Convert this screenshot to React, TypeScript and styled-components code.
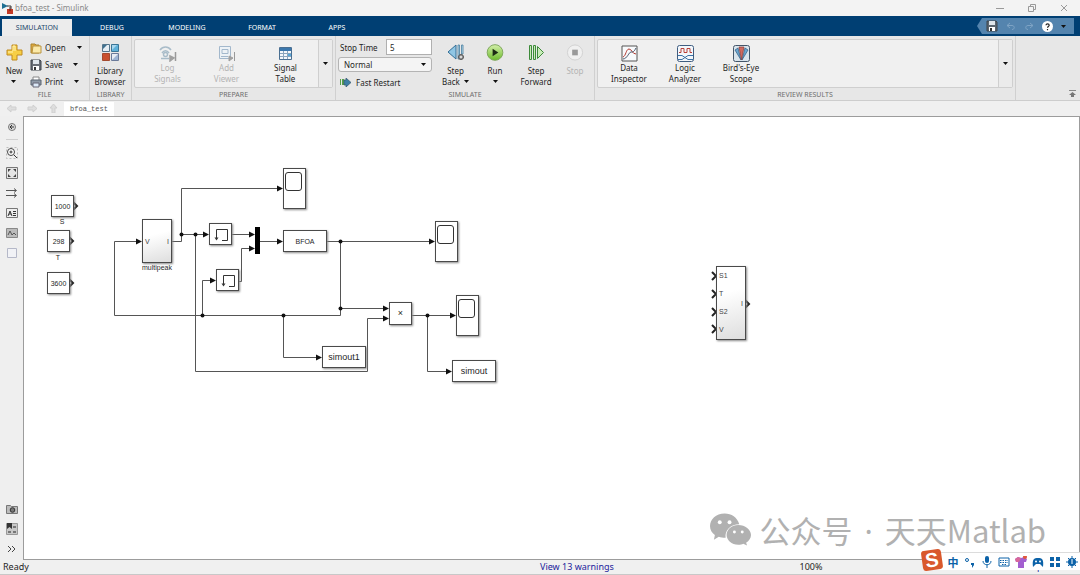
import React from "react";
import styled, { createGlobalStyle, css } from "styled-components";

const Global = createGlobalStyle`
  * { box-sizing: border-box; }
  body { margin: 0; background: #f0f0f0; }
  body, button, input, select {
    font-family: "Noto Sans", "Open Sans", "Noto Sans CJK SC", sans-serif;
    font-size: 8px;
    line-height: 11px;
    color: #1f1f1f;
  }
  button { border: 0; padding: 0; margin: 0; background: none; }
  svg { display: block; flex: none; }
`;

const Window = styled.div`
  display: flex;
  flex-direction: column;
  min-height: 100vh;
  position: relative;
`;

/* ---------- title bar ---------- */

const TitleBar = styled.header`
  display: flex;
  align-items: center;
  height: 16px;
  padding: 0 12px 0 2px;
  background: #f3f3f3;
  color: #8a8a8a;
`;

const WindowTitle = styled.h1`
  flex: 1;
  margin: 0 0 0 2px;
  font-size: 8px;
  line-height: 16px;
  font-weight: 400;
`;

const WindowButtons = styled.div`
  display: flex;
  gap: 24px;
`;

/* ---------- tab strip ---------- */

const TabStrip = styled.nav`
  display: flex;
  align-items: flex-end;
  gap: 5px;
  height: 20px;
  padding: 0 6px 0 2px;
  background: #003f73;
`;

const Tab = styled.button<{ $active?: boolean }>`
  width: 70px;
  height: 17px;
  font-size: 7px;
  color: #fff;
  ${(p) => p.$active && css`
    background: #ececec;
    color: #24476b;
  `}
`;

const QuickAccess = styled.div`
  display: flex;
  align-items: center;
  gap: 8px;
  height: 16px;
  margin: 0 0 2px auto;
  padding: 0 8px 0 9px;
  background: #5484ae;
  clip-path: polygon(5px 0, 100% 0, 100% 100%, 5px 100%, 0 50%);
`;

/* ---------- ribbon ---------- */

const Ribbon = styled.div`
  display: flex;
  height: 65px;
  background: #e7e7e7;
  border-bottom: 1px solid #cdcdcd;
`;

const Group = styled.section<{ $width?: number }>`
  display: flex;
  flex-direction: column;
  flex: ${(p) => (p.$width ? `0 0 ${p.$width}px` : "1 1 0")};
  border-right: 1px solid #d0d0d0;
`;

const GroupBody = styled.div`
  display: flex;
  height: 54px;
  padding: 3px 2px 0;
`;

const GroupLabel = styled.h2`
  margin: 0;
  font-size: 7px;
  line-height: 10px;
  font-weight: 400;
  text-align: center;
  color: #6e6e6e;
`;

const BigButton = styled.button<{ $width: number; $tight?: boolean }>`
  display: flex;
  flex-direction: column;
  align-items: center;
  width: ${(p) => p.$width}px;
  padding-top: 5px;
  gap: ${(p) => (p.$tight ? 0 : 4)}px;
  color: #1f1f1f;
  &:disabled { color: #b4b4b4; }
`;

const CaptionLine = styled.span`
  display: flex;
  align-items: center;
  justify-content: center;
  gap: 4px;
  height: 11px;
`;

const Caption = styled.span`
  display: flex;
  flex-direction: column;
`;

const FileRows = styled.div`
  display: flex;
  flex-direction: column;
  margin-left: 4px;
`;

const FileRow = styled.button`
  display: flex;
  align-items: center;
  gap: 3px;
  height: 17px;
`;

const RowCaret = styled.span`
  margin-left: 8px;
`;

const Gallery = styled.div`
  display: flex;
  flex: 1;
  height: 49px;
  padding-left: 3px;
  border: 1px solid #cfcfcf;
  border-radius: 2px;
  background: #f0f0f0;
`;

const GalleryMore = styled.button`
  display: flex;
  align-items: center;
  justify-content: center;
  width: 14px;
  margin-left: auto;
  border-left: 1px solid #cfcfcf;
  background: #ebebeb;
`;

const SimFields = styled.div`
  display: flex;
  flex-direction: column;
  gap: 2px;
  width: 94px;
`;

const FieldLine = styled.label`
  display: flex;
  align-items: center;
  justify-content: space-between;
  padding-left: 2px;
`;

const TimeInput = styled.input`
  width: 46px;
  height: 16px;
  padding: 0 3px;
  border: 1px solid #b0b0b0;
  background: #fff;
`;

const SelectWrap = styled.div`
  display: grid;
  align-items: center;
  > * { grid-area: 1 / 1; }
  > svg { justify-self: end; margin-right: 6px; pointer-events: none; }
`;

const ModeSelect = styled.select`
  appearance: none;
  height: 15px;
  padding: 0 5px;
  border: 1px solid #b4b4b4;
  border-radius: 3px;
  background: #f4f4f4;
`;

const FastRestart = styled.button`
  display: flex;
  align-items: center;
  gap: 4px;
  height: 16px;
  padding-left: 2px;
`;

const RibbonTail = styled.div`
  display: flex;
  align-items: flex-end;
  justify-content: flex-end;
  flex: 0 0 64px;
  padding: 0 4px 2px 0;
`;

/* ---------- path bar ---------- */

const PathBar = styled.div`
  display: flex;
  align-items: center;
  height: 15px;
  padding-left: 6px;
  gap: 10px;
  background: #f0f0f0;
`;

const PathTab = styled.button`
  align-self: flex-end;
  width: 50px;
  height: 14px;
  margin-left: -5px;
  background: #fff;
  font-family: "Liberation Mono", monospace;
  font-size: 7px;
  color: #555;
`;

/* ---------- workspace ---------- */

const Workspace = styled.main`
  display: flex;
  flex: 1;
`;

const SideBar = styled.aside`
  display: flex;
  flex-direction: column;
  align-items: center;
  gap: 8px;
  width: 23px;
  padding: 5px 0;
  background: #efefef;
`;

const ToolButton = styled.button`
  display: flex;
  align-items: center;
  justify-content: center;
  width: 12px;
  height: 12px;
`;

const SideRule = styled.hr`
  width: 12px;
  height: 1px;
  margin: -2px 0 -1px;
  border: 0;
  background: #cfcfcf;
`;

const SideSpacer = styled.div`
  flex: 1;
`;

const Canvas = styled.div`
  position: relative;
  flex: 1;
  min-height: 444px;
  overflow: hidden;
  background: #fff;
  border: 1px solid #9c9c9c;
`;

const Wires = styled.svg`
  position: absolute;
  left: 0;
  top: 0;
`;

type Box = { $x: number; $y: number; $w: number; $h: number };

const Block = styled.div<Box & { $shaded?: boolean; $size?: number }>`
  position: absolute;
  left: ${(p) => p.$x}px;
  top: ${(p) => p.$y}px;
  width: ${(p) => p.$w}px;
  height: ${(p) => p.$h}px;
  display: flex;
  align-items: center;
  justify-content: center;
  border: 1px solid #4a4a4a;
  background: ${(p) => (p.$shaded ? "linear-gradient(165deg, #fff 35%, #dedede)" : "#fff")};
  box-shadow: 1px 1px 2px #8a8a8a;
  font-family: "Liberation Sans", Arial, sans-serif;
  font-size: ${(p) => p.$size ?? 7}px;
`;

const BlockName = styled.div<{ $x: number; $y: number }>`
  position: absolute;
  left: ${(p) => p.$x}px;
  top: ${(p) => p.$y}px;
  width: 40px;
  text-align: center;
  font-family: "Liberation Sans", Arial, sans-serif;
  font-size: 7px;
  line-height: 8px;
`;

const PortRow = styled.div`
  display: flex;
  align-items: center;
  justify-content: space-between;
  width: 100%;
  padding: 0 2px;
  color: #444;
`;

const PortColumn = styled.div`
  display: flex;
  flex-direction: column;
  line-height: 18px;
`;

const ScopeBody = styled(Block)`
  align-items: flex-start;
  padding: 3px 2px 0 0;
`;

const ScopeScreen = styled.div`
  width: 17px;
  height: 19px;
  border: 1px solid #333;
  border-radius: 3px;
`;

const Watermark = styled.div`
  position: absolute;
  right: 33px;
  bottom: 7px;
  display: flex;
  align-items: center;
  gap: 9px;
  color: #b1b1b1;
  font-family: "Noto Sans CJK SC", sans-serif;
  font-size: 31px;
  font-weight: 400;
  line-height: 44px;
  white-space: pre;
`;

const MiddleDot = styled.span`
  margin: 0 5px;
  font-family: "Noto Sans", sans-serif;
  line-height: 1;
`;

/* ---------- status bar ---------- */

const StatusBar = styled.footer`
  display: grid;
  grid-template-columns: 2fr 1fr 1fr;
  align-items: center;
  height: 15px;
  padding: 0 3px;
  border-bottom: 1px solid #c8c8c8;
  background: #f0f0f0;
  font-size: 9px;
  line-height: 14px;
`;

const StatusLink = styled.a`
  color: #1d1d9c;
  text-decoration: none;
`;

const StatusRight = styled.div`
  display: flex;
  justify-content: space-between;
  margin-left: -9px;
`;

/* ---------- input method bar ---------- */

const ImeBar = styled.div`
  position: absolute;
  right: 0;
  bottom: 5px;
  display: flex;
  align-items: center;
  gap: 5px;
  height: 18px;
  padding: 0 2px 0 0;
  background: #fff;
  border-top: 1px solid #dcdcdc;
`;

const ImeLogo = styled.div`
  display: flex;
  align-items: center;
  justify-content: center;
  width: 20px;
  height: 20px;
  margin: -3px 0 0 -1px;
  border-radius: 3px;
  background: #d9582c;
  color: #fff;
  font: 700 20px/20px "Liberation Sans", sans-serif;
  transform: rotate(-8deg);
`;

const ImeButton = styled.button`
  display: flex;
  align-items: center;
  justify-content: center;
  width: 12px;
  height: 14px;
  font: 700 11px/14px "Noto Sans CJK SC", sans-serif;
  color: #0c62a8;
`;

/* ---------- drawings ---------- */

const Caret = ({ color = "#111" }: { color?: string }) => (
  <svg width="5" height="3" viewBox="0 0 5 3"><path d="M0 0h5L2.5 3z" fill={color} /></svg>
);

const AppIcon = () => (
  <svg width="11" height="12" viewBox="0 0 11 12">
    <path d="M0 1l6 3-6 3z" fill="#1f6f92" />
    <path d="M5 4h4v3" stroke="#333" fill="none" />
    <path d="M5 7h6v5H5z" fill="#c23a26" />
    <path d="M8 5v4" stroke="#5a2018" />
  </svg>
);

const PlusIcon = () => (
  <svg width="17" height="17" viewBox="0 0 17 17">
    <path d="M6 1h5v5h5v5h-5v5H6v-5H1V6h5z" fill="#f7cf45" stroke="#c08a1e" strokeLinejoin="round" />
    <path d="M7 7V2h2v5M2 8h5" stroke="#fff3b8" fill="none" />
  </svg>
);

const FolderIcon = () => (
  <svg width="12" height="12" viewBox="0 0 12 12">
    <path d="M1 2h4l1 1h3v8H1z" fill="#e2a93a" stroke="#a8832f" />
    <path d="M3 4h8v7H2z" fill="#fbe9a8" stroke="#b99443" />
  </svg>
);

const FloppyIcon = ({ light }: { light?: boolean }) => (
  <svg width="12" height="12" viewBox="0 0 12 12">
    <path d="M1 1h9l1 1v9H1z" fill={light ? "#5b6670" : "#6a6f76"} stroke="#3f444a" />
    <path d="M3 1h6v4H3z" fill="#dfe5ea" />
    <path d="M3 7h6v4H3z" fill="#fff" />
    <path d="M4 8h2v3H4z" fill="#333" />
  </svg>
);

const PrinterIcon = () => (
  <svg width="12" height="12" viewBox="0 0 12 12">
    <path d="M3 1h6v4H3z" fill="#fff" stroke="#888" />
    <path d="M1 4h10v5H1z" fill="#8f9aa8" stroke="#5a6470" />
    <path d="M3 7h6v4H3z" fill="#dbe9f8" stroke="#667" />
  </svg>
);

const LibraryIcon = () => (
  <svg width="17" height="17" viewBox="0 0 17 17">
    <path d="M.5.5h7v7h-7z" fill="#e5edf3" stroke="#55768c" />
    <path d="M9.500.5h7v7h-7z" fill="#5fb0d8" stroke="#3a7596" />
    <path d="M.5 9.500h7v7h-7z" fill="#c9502f" stroke="#a34a30" />
    <path d="M9.500 9.500h7v7h-7z" fill="#e6ecf4" stroke="#6a7a9a" />
    <path d="M1 1h4L1 5z" fill="#3f718f" />
    <path d="M10 1h5l-5 5z" fill="#a9d7ee" />
    <path d="M16 10v6h-6z" fill="#9db4d4" />
  </svg>
);

const LogIcon = () => (
  <svg width="18" height="17" viewBox="0 0 18 17" fill="none" stroke="#a9bcc9" strokeWidth="1.500">
    <path d="M1 5C4 1 9 1 12 5M3 8c2-3 5-3 7 0M2 13.500h8" />
    <circle cx="6.500" cy="9.500" r="2" />
    <path d="M11 11l4 2-4 3z" fill="#a0a0a0" stroke="#a0a0a0" />
    <path d="M16.500 7v9" stroke="#999" />
  </svg>
);

const ViewerIcon = () => (
  <svg width="18" height="17" viewBox="0 0 18 17" fill="none" stroke="#a3b8cc">
    <path d="M1.500 1.500h11v12h-11z" fill="#edf2f6" />
    <path d="M4 4.500h6v4H4zM3 11.500h7" />
    <path d="M11 11l4 2-4 3z" fill="#a0a0a0" stroke="#a0a0a0" />
    <path d="M16.500 7v9" stroke="#999" />
  </svg>
);

const TableIcon = () => (
  <svg width="14" height="17" viewBox="0 0 14 17">
    <path d="M.5 2.500h12v12H.5z" fill="#f4f8fb" stroke="#4a6f92" />
    <path d="M1 3h11v3H1z" fill="#3c78ad" />
    <path d="M1 8.500h11M1 11.500h11M4.500 6v8M8.500 6v8" stroke="#8aa5be" />
    <path d="M9 9h3v2H9z" fill="#58a8d8" />
  </svg>
);

const FastIcon = () => (
  <svg width="12" height="9" viewBox="0 0 12 9">
    <path d="M0 1h1v6H0zM2 1h2v6H2z" fill="#56a04b" />
    <path d="M4 2h2V0l5 4.500L6 9V7H4z" fill="#3e7fa6" stroke="#375a70" strokeWidth=".7" />
  </svg>
);

const StepBackIcon = () => (
  <svg width="17" height="17" viewBox="0 0 17 17">
    <path d="M9 1v14L1 8z" fill="#8fc6e4" stroke="#356f96" />
    <path d="M11 1h1.500v14H11zM14.500 1H16v9h-1.500z" fill="#b8dced" stroke="#4a7f9f" strokeWidth=".8" />
    <circle cx="14" cy="13" r="2.500" fill="#999" stroke="#555" />
    <circle cx="14" cy="13" r="1" fill="#eee" />
  </svg>
);

const RunIcon = () => (
  <svg width="18" height="17" viewBox="0 0 18 18">
    <defs>
      <linearGradient id="run" x2="0" y2="1">
        <stop offset="0" stopColor="#d4efab" />
        <stop offset="1" stopColor="#6dbb2c" />
      </linearGradient>
    </defs>
    <circle cx="9" cy="9" r="8.300" fill="url(#run)" stroke="#7ca65a" />
    <path d="M6.500 5l6 4-6 4z" fill="#1c2a14" />
  </svg>
);

const StepForwardIcon = () => (
  <svg width="17" height="17" viewBox="0 0 17 17" stroke="#3d8a3a">
    <path d="M1.500 1.500h2v14h-2zM5.500 1.500h2v14h-2z" fill="#c9ecb8" />
    <path d="M9.500 2.500l6 6-6 6z" fill="#c9ecb8" />
  </svg>
);

const StopIcon = () => (
  <svg width="18" height="17" viewBox="0 0 18 18">
    <circle cx="9" cy="9" r="8" fill="#f0f0f0" stroke="#d0d0d0" />
    <path d="M6 6h6v6H6z" fill="#999" />
  </svg>
);

const InspectorIcon = () => (
  <svg width="17" height="17" viewBox="0 0 17 17" fill="none">
    <path d="M1 1h15v15H1z" fill="#f8fafc" stroke="#555" />
    <path d="M2 12C5 11 5 4 8 4s3 5 7 5" stroke="#b33b32" />
    <path d="M2 14C6 14 8 7 10 7s3 0 5-4" stroke="#44556a" />
  </svg>
);

const LogicIcon = () => (
  <svg width="17" height="17" viewBox="0 0 17 17" fill="none">
    <rect x=".5" y=".5" width="16" height="16" rx="2" fill="#f3f7fb" stroke="#3f5d80" />
    <path d="M2 7.500h2v-4h3v4h3v-4h3v4h2" stroke="#b94038" />
    <path d="M1 10.500h4l6 4h5M1 14.500h4l6-4h5" stroke="#3d72a5" />
  </svg>
);

const BirdIcon = () => (
  <svg width="17" height="17" viewBox="0 0 17 17">
    <rect x=".5" y=".5" width="16" height="16" rx="2" fill="#d9e4ec" stroke="#44566a" />
    <path d="M8 15L2 5l3-2zM9 15l6-10-3-2z" fill="#6ca6cf" stroke="#2f5c82" strokeWidth=".7" />
    <path d="M8.500 15L6 2h5z" fill="#cf6a60" stroke="#8f3a34" strokeWidth=".7" />
  </svg>
);

const PathArrow = ({ turn = 0 }: { turn?: number }) => (
  <svg width="11" height="9" viewBox="0 0 11 9">
    <path d="M1 4.500L5 1v2h5v3H5v2z" transform={`rotate(${turn} 5.500 4.500)`} fill="#dedede" stroke="#cfcfcf" />
  </svg>
);

const toolShapes: Record<string, React.ReactNode> = {
  "Hide browser": <><circle cx="6" cy="6" r="3.500" fill="#ddd" stroke="#777" /><path d="M4 6h4M6 4L4 6l2 2" stroke="#333" fill="none" /></>,
  Zoom: <><path d="M.5 .5h11v11H.5z" fill="none" stroke="#bbb" strokeDasharray="2 2" /><circle cx="5" cy="5" r="3.500" fill="#fff" stroke="#444" /><path d="M3.500 5h3M5 3.500v3M8 8l3 3" stroke="#333" /></>,
  "Fit to view": <><path d="M.5 .5h11v11H.5z" fill="#e4e4e4" stroke="#777" /><path d="M2 2h3L2 5zM10 2v3L7 2zM2 10V7l3 3zM10 10H7l3-3z" fill="#444" /></>,
  "Sample time": <path d="M0 3.500h10M0 8.500h10M8 1.500l2.500 2L8 5.500M8 6.500l2.500 2-2.500 2" stroke="#555" fill="none" />,
  Annotation: <><path d="M.5 1.500h11v9H.5z" fill="#eee" stroke="#777" /><path d="M2 9l2-5 2 5M3 7h2M7 4.500h3M7 6.500h3M7 8.500h3" stroke="#333" fill="none" /></>,
  Image: <><path d="M.5 1.500h11v9H.5z" fill="#bbb" stroke="#888" /><path d="M2 8l2-4 2 4 2-2 2 2" stroke="#555" fill="none" /></>,
  Area: <path d="M1.500 1.500h9v9h-9z" fill="#f1f2f6" stroke="#b5b8c8" />,
  Screenshot: <><path d="M.5 2.500h4l1 1h6v7H.5z" fill="#bbb" stroke="#777" /><circle cx="6.500" cy="7" r="2.300" fill="#777" stroke="#333" /></>,
  Bookmarks: <><path d="M.5 .5h11v11H.5z" fill="#c8c8c8" stroke="#999" /><path d="M1 0h5v6L3.500 4 1 6z" fill="#333" /><path d="M2 8h3v2H2zM7 3h3v2H7zM7 8h3v2H7z" fill="#777" /></>,
  More: <path d="M2 3l3 3-3 3M6 3l3 3-3 3" stroke="#444" fill="none" />,
};

const Tool = ({ name }: { name: string }) => (
  <ToolButton aria-label={name}>
    <svg width="12" height="12" viewBox="0 0 12 12">{toolShapes[name]}</svg>
  </ToolButton>
);

const MemoryGlyph = () => (
  <svg width="18" height="18" viewBox="0 0 18 18" fill="none" stroke="#333">
    <path d="M4.500 14V4.500h11v11H10" />
    <path d="M2.500 12.500h4l-2 3z" fill="#333" stroke="none" />
  </svg>
);

const Scope = ({ x, y }: { x: number; y: number }) => (
  <ScopeBody $x={x} $y={y} $w={23} $h={41}><ScopeScreen /></ScopeBody>
);

const wirePaths = [
  "M148 124.500h9.500v-53h96",
  "M157.500 117.500h22",
  "M171.500 117.500v137h172v-53h16",
  "M207 117.500h20",
  "M214 164.500h3.500v-33h10",
  "M236 124.500h17",
  "M302 124.500h104",
  "M316.500 124.500v74H90.500v-74h22",
  "M316.500 191.500h43",
  "M178.500 198.500v-35h8",
  "M259.500 198.500v42h33",
  "M387 198.500h40",
  "M403.500 198.500v56h20",
];

const arrowHeads = [
  [259, 71], [185, 117], [365, 201], [231, 117], [231, 131], [259, 124], [411, 124],
  [118, 124], [365, 191], [192, 163], [298, 240], [432, 198], [428, 254],
];

const junctions = [
  [157, 117], [171, 117], [178, 198], [259, 198], [316, 124], [316, 191], [403, 198],
];

const openPorts = [
  [49, 89], [45, 124], [45, 166], [688, 159], [688, 177], [688, 195], [688, 212], [721, 187],
];

const WireLayer = () => (
  <Wires width="760" height="300" viewBox="0 0 760 300" fill="none">
    <path d={wirePaths.join("")} stroke="#555" />
    {arrowHeads.map(([x, y]) => (
      <path key={`${x}-${y}`} d={`M${x} ${y + 0.5}l-6-3v6z`} fill="#111" />
    ))}
    {junctions.map(([x, y]) => (
      <circle key={`${x}-${y}`} cx={x + 0.5} cy={y + 0.5} r="2" fill="#111" />
    ))}
    {openPorts.map(([x, y]) => (
      <path key={`${x}-${y}`} d={`M${x} ${y - 4}l4 4-4 4`} stroke="#222" strokeWidth="2" />
    ))}
    <path d="M231 110h5v27h-5z" fill="#000" />
  </Wires>
);

const WeChatIcon = () => (
  <svg width="41" height="34" viewBox="0 0 42 34">
    <path d="M15 0C6 0 0 6 0 13c0 4 2 7 5 9l-1 5 5-3c2 1 4 1 7 1-1-8 5-14 14-14C28 4 22 0 15 0z" fill="#b1b1b1" />
    <path d="M29 12c-7 0-12 5-12 10s5 10 12 10c2 0 4 0 5-1l4 2-1-3c3-2 5-5 5-8 0-5-6-10-13-10z" fill="#b1b1b1" />
    <g fill="#fff"><circle cx="10" cy="9" r="2" /><circle cx="20" cy="9" r="2" /><circle cx="25" cy="19" r="1.500" /><circle cx="33" cy="19" r="1.500" /></g>
  </svg>
);

const imeShapes: Record<string, React.ReactNode> = {
  Punctuation: <><circle cx="3" cy="4" r="1.500" fill="none" stroke="#0c62a8" /><path d="M7 7h3v2L8 12V9H7z" /></>,
  Voice: <><rect x="4" y="0" width="4" height="7" rx="2" /><path d="M2 5c0 5 8 5 8 0M6 9v3" fill="none" stroke="#0c62a8" /></>,
  Keyboard: <><path d="M1 2h10v8H1z" fill="#fff" stroke="#0c62a8" /><path d="M2 4.500h8M2 6.500h8M4 8.500h4" stroke="#0c62a8" strokeDasharray="1.500 1" /></>,
  Skin: <><path d="M0 3l3-2 3 1 3-1 3 2-1 3H9v6H3V6H1z" fill="#a35fd0" /><path d="M0 3l3-2 3 1-2 4H1z" fill="#d8679a" /><circle cx="10" cy="1" r="2" fill="#e0583c" /></>,
  Game: <><path d="M1 11C0 3 2 2 6 2s6 1 5 9L8 8H4z" /><circle cx="4" cy="5.500" r="1" fill="#fff" /><circle cx="8" cy="5.500" r="1" fill="#fff" /></>,
  Toolbox: <path d="M1 1h4v4H1zM7 1h4v4H7zM1 7h4v4H1zM7 7h4v4H7z" />,
  Settings: <><circle cx="6" cy="6" r="4" /><path d="M6 0v12M0 6h12M2 2l8 8M10 2l-8 8" stroke="#0c62a8" /><path d="M6 3v5" stroke="#fff" /></>,
};

/* ---------- page ---------- */

const tabs = ["SIMULATION", "DEBUG", "MODELING", "FORMAT", "APPS"];

const LargeAction = ({ icon, lines, width, tight, disabled, caret }: {
  icon: React.ReactNode; lines: string[]; width: number; tight?: boolean; disabled?: boolean; caret?: boolean;
}) => (
  <BigButton $width={width} $tight={tight} disabled={disabled}>
    {icon}
    <Caption>
      {lines.map((line, i) => (
        <CaptionLine key={line || "caret"}>
          {line}{caret && i === lines.length - 1 && <Caret />}
        </CaptionLine>
      ))}
    </Caption>
  </BigButton>
);

const FileAction = ({ icon, text }: { icon: React.ReactNode; text: string }) => (
  <FileRow>{icon}{text}<RowCaret><Caret /></RowCaret></FileRow>
);

export default function App() {
  return (
    <Window>
      <Global />
      <TitleBar>
        <AppIcon />
        <WindowTitle>bfoa_test - Simulink</WindowTitle>
        <WindowButtons>
          <button aria-label="Minimize"><svg width="8" height="8" stroke="#999"><path d="M0 4.500h8" /></svg></button>
          <button aria-label="Restore"><svg width="8" height="8" stroke="#999" fill="none"><path d="M.5 2.500h5v5h-5zM2.500 2V.5h5v5H6" /></svg></button>
          <button aria-label="Close"><svg width="8" height="8" stroke="#999"><path d="M1 1l6 6M7 1L1 7" /></svg></button>
        </WindowButtons>
      </TitleBar>

      <TabStrip>
        {tabs.map((t, i) => <Tab key={t} $active={i === 0}>{t}</Tab>)}
        <QuickAccess>
          <button aria-label="Save"><FloppyIcon light /></button>
          <button aria-label="Undo"><svg width="10" height="8" stroke="#7ea3c4" fill="none"><path d="M4 1L1 3.500 4 6M1 3.500h5c3 0 3 4 0 4" /></svg></button>
          <button aria-label="Redo"><svg width="10" height="8" stroke="#7ea3c4" fill="none"><path d="M6 1l3 2.500L6 6M9 3.500H4c-3 0-3 4 0 4" /></svg></button>
          <button aria-label="Help">
            <svg width="11" height="11" viewBox="0 0 11 11">
              <circle cx="5.500" cy="5.500" r="5.500" fill="#fff" />
              <path d="M4 4.300c0-2 3.200-2 3.200 0 0 1.200-1.700 1.200-1.700 2.500M5.500 8v1.200" stroke="#222" strokeWidth="1.200" fill="none" />
            </svg>
          </button>
          <button aria-label="More"><Caret /></button>
        </QuickAccess>
      </TabStrip>

      <Ribbon>
        <Group $width={90}>
          <GroupBody>
            <LargeAction icon={<PlusIcon />} lines={["New", ""]} width={24} caret />
            <FileRows>
              <FileAction icon={<FolderIcon />} text="Open" />
              <FileAction icon={<FloppyIcon />} text="Save" />
              <FileAction icon={<PrinterIcon />} text="Print" />
            </FileRows>
          </GroupBody>
          <GroupLabel>FILE</GroupLabel>
        </Group>
        <Group $width={42}>
          <GroupBody>
            <LargeAction icon={<LibraryIcon />} lines={["Library", "Browser"]} width={36} />
          </GroupBody>
          <GroupLabel>LIBRARY</GroupLabel>
        </Group>
        <Group $width={204}>
          <GroupBody>
            <Gallery>
              <LargeAction icon={<LogIcon />} lines={["Log", "Signals"]} width={59} tight disabled />
              <LargeAction icon={<ViewerIcon />} lines={["Add", "Viewer"]} width={59} tight disabled />
              <LargeAction icon={<TableIcon />} lines={["Signal", "Table"]} width={59} tight />
              <GalleryMore aria-label="More"><Caret /></GalleryMore>
            </Gallery>
          </GroupBody>
          <GroupLabel>PREPARE</GroupLabel>
        </Group>
        <Group $width={259}>
          <GroupBody>
            <SimFields>
              <FieldLine>Stop Time<TimeInput defaultValue="5" /></FieldLine>
              <SelectWrap>
                <ModeSelect aria-label="Simulation mode"><option>Normal</option></ModeSelect>
                <Caret />
              </SelectWrap>
              <FastRestart><FastIcon />Fast Restart</FastRestart>
            </SimFields>
            <LargeAction icon={<StepBackIcon />} lines={["Step", "Back"]} width={47} caret />
            <LargeAction icon={<RunIcon />} lines={["Run", ""]} width={32} caret />
            <LargeAction icon={<StepForwardIcon />} lines={["Step", "Forward"]} width={50} />
            <LargeAction icon={<StopIcon />} lines={["Stop"]} width={28} disabled />
          </GroupBody>
          <GroupLabel>SIMULATE</GroupLabel>
        </Group>
        <Group>
          <GroupBody>
            <Gallery>
              <LargeAction icon={<InspectorIcon />} lines={["Data", "Inspector"]} width={56} tight />
              <LargeAction icon={<LogicIcon />} lines={["Logic", "Analyzer"]} width={56} tight />
              <LargeAction icon={<BirdIcon />} lines={["Bird's-Eye", "Scope"]} width={56} tight />
              <GalleryMore aria-label="More"><Caret /></GalleryMore>
            </Gallery>
          </GroupBody>
          <GroupLabel>REVIEW RESULTS</GroupLabel>
        </Group>
        <RibbonTail>
          <button aria-label="Collapse toolstrip"><svg width="7" height="8"><path d="M0 .5h7" stroke="#888" /><path d="M3.500 2L7 5H5v2H2V5H0z" fill="#777" /></svg></button>
        </RibbonTail>
      </Ribbon>

      <PathBar>
        <button aria-label="Back"><PathArrow /></button>
        <button aria-label="Forward"><PathArrow turn={180} /></button>
        <button aria-label="Up"><PathArrow turn={90} /></button>
        <PathTab>bfoa_test</PathTab>
      </PathBar>

      <Workspace>
        <SideBar>
          <Tool name="Hide browser" />
          <SideRule />
          {["Zoom", "Fit to view", "Sample time", "Annotation", "Image", "Area"].map((n) => <Tool key={n} name={n} />)}
          <SideSpacer />
          {["Screenshot", "Bookmarks", "More"].map((n) => <Tool key={n} name={n} />)}
        </SideBar>
        <Canvas>
          <WireLayer />
          <Block $x={27} $y={78} $w={23} $h={22}>1000</Block>
          <BlockName $x={18} $y={101}>S</BlockName>
          <Block $x={23} $y={113} $w={23} $h={22}>298</Block>
          <BlockName $x={14} $y={137}>T</BlockName>
          <Block $x={23} $y={155} $w={23} $h={22}>3600</Block>
          <Block $x={118} $y={102} $w={30} $h={44} $shaded>
            <PortRow><span>V</span><span>I</span></PortRow>
          </Block>
          <BlockName $x={113} $y={147}>multipeak</BlockName>
          <Scope x={259} y={51} />
          <Block $x={185} $y={106} $w={23} $h={22}><MemoryGlyph /></Block>
          <Block $x={192} $y={152} $w={23} $h={22}><MemoryGlyph /></Block>
          <Block $x={259} $y={113} $w={44} $h={22}>BFOA</Block>
          <Scope x={411} y={104} />
          <Block $x={365} $y={185} $w={23} $h={23} $size={9}>×</Block>
          <Scope x={432} y={178} />
          <Block $x={298} $y={229} $w={44} $h={22} $size={9}>simout1</Block>
          <Block $x={428} $y={243} $w={44} $h={22} $size={9}>simout</Block>
          <Block $x={692} $y={149} $w={30} $h={74} $shaded>
            <PortRow>
              <PortColumn><span>S1</span><span>T</span><span>S2</span><span>V</span></PortColumn>
              <span>I</span>
            </PortRow>
          </Block>
          <Watermark><WeChatIcon /><span>公众号 <MiddleDot>·</MiddleDot> 天天Matlab</span></Watermark>
        </Canvas>
      </Workspace>

      <StatusBar>
        <span>Ready</span>
        <StatusLink href="#warnings">View 13 warnings</StatusLink>
        <StatusRight>
          <span>100%</span>
          <StatusLink href="#solver">VariableStepDiscrete</StatusLink>
        </StatusRight>
      </StatusBar>

      <ImeBar>
        <ImeLogo>S</ImeLogo>
        <ImeButton>中</ImeButton>
        {Object.keys(imeShapes).map((n) => (
          <ImeButton key={n} aria-label={n}>
            <svg width="12" height="12" viewBox="0 0 12 12" fill="#0c62a8">{imeShapes[n]}</svg>
          </ImeButton>
        ))}
      </ImeBar>
    </Window>
  );
}
